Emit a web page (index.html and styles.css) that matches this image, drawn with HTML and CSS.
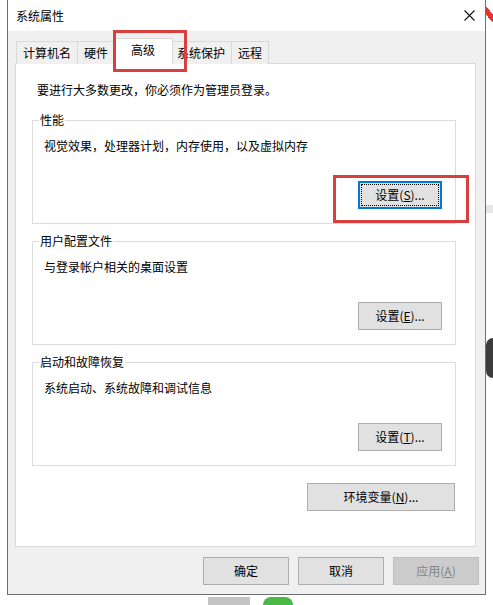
FILE: index.html
```html
<!DOCTYPE html>
<html lang="zh-CN">
<head>
    <meta charset="UTF-8">
    <title>系统属性</title>
    <link rel="stylesheet" href="styles.css">
</head>
<body>
    <div class="window">
        <div class="titlebar">
            <span class="title">系统属性</span>
            <svg class="close" width="11" height="11" viewBox="0 0 11 11">
                <path d="M0.5 0.5 L10.5 10.5 M10.5 0.5 L0.5 10.5" stroke="#111" stroke-width="1.1" fill="none"/>
            </svg>
        </div>

        <div class="content">
            <div class="tabs">
                <div class="tab">计算机名</div>
                <div class="tab">硬件</div>
                <div class="tab active">高级</div>
                <div class="tab">系统保护</div>
                <div class="tab">远程</div>
            </div>

            <div class="panel">
                <div class="intro">要进行大多数更改，你必须作为管理员登录。</div>

                <fieldset class="group">
                    <legend>性能</legend>
                    <div class="desc">视觉效果，处理器计划，内存使用，以及虚拟内存</div>
                    <div class="row">
                        <button class="btn focused">设置(<u>S</u>)...</button>
                    </div>
                </fieldset>

                <fieldset class="group">
                    <legend>用户配置文件</legend>
                    <div class="desc">与登录帐户相关的桌面设置</div>
                    <div class="row">
                        <button class="btn">设置(<u>E</u>)...</button>
                    </div>
                </fieldset>

                <fieldset class="group">
                    <legend>启动和故障恢复</legend>
                    <div class="desc">系统启动、系统故障和调试信息</div>
                    <div class="row">
                        <button class="btn">设置(<u>T</u>)...</button>
                    </div>
                </fieldset>

                <div class="row env-row">
                    <button class="btn wide">环境变量(<u>N</u>)...</button>
                </div>
            </div>

            <div class="actions">
                <button class="btn action">确定</button>
                <button class="btn action">取消</button>
                <button class="btn action" disabled>应用(<u>A</u>)</button>
            </div>
        </div>
    </div>

    <!-- 截图里的红色标注框 -->
    <div class="mark mark-tab"></div>
    <div class="mark mark-btn"></div>

    <!-- 窗口后面露出来的桌面 -->
    <div class="bg-red"></div>
    <div class="bg-band"></div>
    <div class="bg-circle"></div>
    <div class="bg-gray"></div>
    <div class="bg-green"></div>
</body>
</html>
```

FILE: styles.css
```css
* {
    box-sizing: border-box;
}

body {
    margin: 0;
    width: 493px;
    height: 605px;
    overflow: hidden;
    position: relative;
    background: #fff;
    font-family: "Noto Sans CJK SC", "Microsoft YaHei", sans-serif;
    font-size: 12px;
    color: #000;
}

.window {
    position: relative;
    z-index: 1;
    margin: -1px 0 0 7px;
    width: 479px;
    border: 1px solid #6f6f6f;
    background: #f0f0f0;
}

.titlebar {
    height: 31px;
    background: #fff;
    display: flex;
    align-items: center;
    justify-content: space-between;
    padding: 0 10px 0 8px;
    line-height: 16px;
}

.close {
    margin-top: -1px;
}

.content {
    padding: 7px 9px 9px 7px;
}

/* 选项卡 */
.tabs {
    display: flex;
    align-items: flex-end;
    padding-left: 1px;
    margin-bottom: -1px;
    position: relative;
    z-index: 1;
}

.tab {
    height: 23px;
    line-height: 22px;
    padding: 0 6px;
    border: 1px solid #d9d9d9;
    border-bottom: none;
    margin-left: -1px;
    background: #f0f0f0;
}

.tab:first-child {
    margin-left: 0;
}

.tab.active {
    height: 26px;
    line-height: 22px;
    padding: 0 17px;
    margin: 0 -2px 0 -2px;
    background: #fff;
    position: relative;
    z-index: 2;
}

.panel {
    border: 1px solid #d9d9d9;
    background: #fff;
    padding: 18px 19px 35px 16px;
}

.intro {
    line-height: 16px;
    margin-left: 5px;
}

/* 分组框 */
.group {
    margin: 9px 0 0;
    border: 1px solid #dcdcdc;
    padding: 0 13px 14px 6px;
    min-width: 0;
}

.group:first-of-type {
    margin-top: 14px;
}

.group legend {
    padding: 0 1px;
    line-height: 16px;
}

.desc {
    line-height: 16px;
    margin: 10px 0 0 5px;
}

.row {
    display: flex;
    justify-content: flex-end;
    margin-top: 27px;
}

.env-row {
    margin: 17px 1px 0 0;
}

/* 按钮 */
.btn {
    height: 28px;
    width: 84px;
    padding: 0;
    border: 1px solid #adadad;
    background: #e1e1e1;
    font-family: inherit;
    font-size: 12px;
    color: #000;
    line-height: 16px;
}

.btn.focused {
    border-color: #0078d7;
    box-shadow: inset 0 0 0 1px #0078d7;
    outline: 1px dotted #000;
    outline-offset: -4px;
}

.btn.wide {
    width: 148px;
}

.btn:disabled {
    background: #cccccc;
    border-color: #bfbfbf;
    color: #838383;
}

.actions {
    display: flex;
    justify-content: flex-end;
    gap: 9px;
    margin: 10px -3px 0 0;
}

.btn.action {
    width: 86px;
}

/* 标注 */
.mark {
    position: absolute;
    z-index: 3;
    border: 3px solid #d8403f;
}

.mark-tab {
    left: 113px;
    top: 30px;
    width: 74px;
    height: 42px;
}

.mark-btn {
    left: 333px;
    top: 175px;
    width: 136px;
    height: 48px;
}

/* 背景 */
.bg-red {
    position: absolute;
    left: 486px;
    top: 0;
    width: 7px;
    height: 30px;
    background: linear-gradient(50deg, transparent 40%, #e8322b 40%, #e8322b 62%, transparent 62%);
}

.bg-band {
    position: absolute;
    left: 486px;
    top: 205px;
    width: 7px;
    height: 8px;
    background: #e6e6e6;
}

.bg-circle {
    position: absolute;
    left: 486px;
    top: 338px;
    width: 7px;
    height: 40px;
    border-radius: 20px 0 0 20px;
    background: #3c3c3c;
}

.bg-gray {
    position: absolute;
    left: 208px;
    top: 597px;
    width: 42px;
    height: 8px;
    background: #c4c4c4;
}

.bg-green {
    position: absolute;
    left: 263px;
    top: 597px;
    width: 30px;
    height: 8px;
    border-radius: 15px 15px 0 0;
    background: #4cb848;
}
```
